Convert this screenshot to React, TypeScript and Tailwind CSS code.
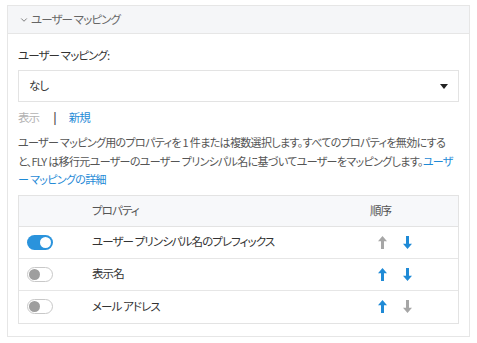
import { ChevronDown } from 'lucide-react';

const rows = [
  { name: 'ユーザー プリンシパル名のプレフィックス', on: true, up: false, down: true },
  { name: '表示名', on: false, up: true, down: true },
  { name: 'メール アドレス', on: false, up: true, down: false },
];

function Arrow({ dir, active }: { dir: 'up' | 'down'; active: boolean }) {
  return (
    <svg
      width="9"
      height="13"
      viewBox="0 0 9 13"
      className={dir === 'down' ? 'rotate-180' : ''}
      fill={active ? '#1f8ad6' : '#a6a6a6'}
    >
      <path d="M4.5 0 L9 5.2 L6 5.2 L6 13 L3 13 L3 5.2 L0 5.2 Z" />
    </svg>
  );
}

function Toggle({ on }: { on: boolean }) {
  return on ? (
    <div className="w-[26px] h-[15px] rounded-full bg-[#2a93dc] flex items-center justify-end pr-[2px]">
      <div className="w-[11px] h-[11px] rounded-full bg-white" />
    </div>
  ) : (
    <div className="w-[26px] h-[15px] rounded-full bg-white border border-[#c8c8c8] flex items-center pl-[1px]">
      <div className="w-[11px] h-[11px] rounded-full bg-[#9e9e9e]" />
    </div>
  );
}

export default function App() {
  return (
    <div className="w-[477px] h-[343px] bg-white pt-[5px] pl-[7px] font-['Segoe_UI','Noto_Sans_CJK_JP',sans-serif] [font-feature-settings:'palt'] text-[11.5px] tracking-[-0.9px] text-[#444]">
      <div className="w-[463px] h-[332px] border border-[#e6e6e6]">
        <div className="h-[28px] bg-[#f5f6f8] border-b border-[#e6e6e6] flex items-center pl-[11px] gap-[2px] text-[#666]">
          <ChevronDown className="w-[10px] h-[10px]" strokeWidth={2} />
          <span>ユーザー マッピング</span>
        </div>
        <div className="px-[10px]">
          <div className="mt-[12px] h-[18px] leading-[18px] text-[#333]">ユーザー マッピング:</div>
          <div className="mt-[6px] h-[32px] border border-[#e3e3e3] flex items-center justify-between pl-[10px] pr-[10px] text-[#333]">
            <span>なし</span>
            <svg width="8" height="5" viewBox="0 0 8 5" fill="#222">
              <path d="M0 0 H8 L4 5 Z" />
            </svg>
          </div>
          <div className="mt-[6px] h-[18px] flex items-center leading-[18px]">
            <span className="text-[#b3b3b3]">表示</span>
            <span className="ml-[14px] text-[#555] font-bold">|</span>
            <span className="ml-[13px] text-[#1f8ad6]">新規</span>
          </div>
          <p className="mt-[7px] text-[11px] tracking-[-0.65px] leading-[18.5px] text-[#555] whitespace-nowrap">
            ユーザー マッピング用のプロパティを 1 件または複数選択します。すべてのプロパティを無効にする
            <br />
            と、FLY は移行元ユーザーのユーザー プリンシパル名に基づいてユーザーをマッピングします。
            <span className="text-[#1f8ad6]">ユーザ</span>
            <br />
            <span className="text-[#1f8ad6]">ー マッピングの詳細</span>
          </p>
          <div className="mt-[6px] border border-[#e3e3e3] text-[#333]">
            <div className="h-[31px] bg-[#f7f8fa] border-b border-[#e3e3e3] flex items-center text-[#555]">
              <div className="w-[73px]" />
              <div className="flex-1">プロパティ</div>
              <div className="w-[88px]">順序</div>
            </div>
            {rows.map((r, i) => (
              <div
                key={r.name}
                className={`h-[32px] flex items-center ${i < rows.length - 1 ? 'border-b border-[#e6e6e6]' : ''}`}
              >
                <div className="w-[73px] pl-[8px]">
                  <Toggle on={r.on} />
                </div>
                <div className="flex-1">{r.name}</div>
                <div className="w-[88px] flex items-center gap-[16px] pl-[8px]">
                  <Arrow dir="up" active={r.up} />
                  <Arrow dir="down" active={r.down} />
                </div>
              </div>
            ))}
          </div>
        </div>
      </div>
    </div>
  );
}
